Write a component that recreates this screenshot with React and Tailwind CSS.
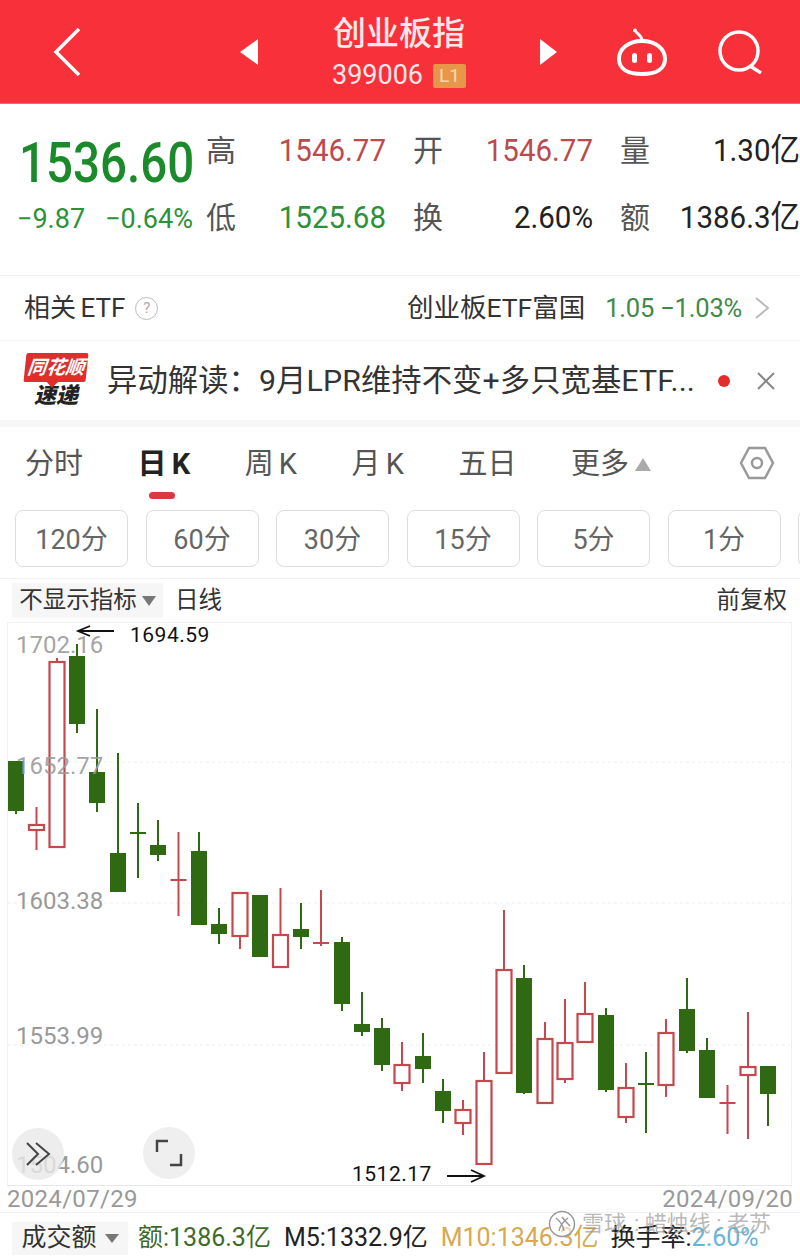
import React from 'react';

// x, wick top, wick bottom, body top, body bottom, up
const candles = [
  [16, 761, 814, 761, 811, 0],
  [36.5, 807, 850, 824, 830, 1],
  [57, 658, 847, 661, 847, 1],
  [77, 644, 733, 656, 724, 0],
  [97, 709, 812, 772, 803, 0],
  [118, 753, 892, 853, 892, 0],
  [138, 803, 878, 833, 833, 0],
  [158, 820, 861, 845, 855, 0],
  [178.5, 832, 916, 880, 880, 1],
  [199, 832, 925, 851, 925, 0],
  [219, 908, 944, 924, 934, 0],
  [240, 892, 949, 892, 936, 1],
  [260, 895, 957, 895, 957, 0],
  [280.5, 888, 967, 934, 967, 1],
  [301, 903, 949, 929, 937, 0],
  [321, 890, 946, 943, 943, 1],
  [342, 937, 1011, 942, 1004, 0],
  [362, 992, 1036, 1024, 1032, 0],
  [382, 1018, 1071, 1028, 1065, 0],
  [402, 1042, 1091, 1064, 1083, 1],
  [423, 1033, 1083, 1056, 1069, 0],
  [443, 1079, 1123, 1091, 1111, 0],
  [463, 1100, 1135, 1109, 1123, 1],
  [484, 1052, 1164, 1080, 1164, 1],
  [504, 910, 1073, 969, 1073, 1],
  [524, 965, 1094, 978, 1093, 0],
  [545, 1022, 1103, 1038, 1103, 1],
  [565, 999, 1083, 1042, 1079, 1],
  [585, 982, 1042, 1013, 1042, 1],
  [606, 1008, 1092, 1015, 1090, 0],
  [626, 1063, 1123, 1087, 1117, 1],
  [646, 1052, 1133, 1084, 1084, 0],
  [666, 1019, 1097, 1032, 1085, 1],
  [687, 978, 1053, 1009, 1051, 0],
  [707, 1038, 1098, 1050, 1098, 0],
  [727.5, 1085, 1134, 1103, 1103, 1],
  [748, 1012, 1139, 1066, 1075, 1],
  [768, 1066, 1126, 1066, 1094, 0],
];

const RED = '#c5484c';
const GREEN = '#2f6a12';

const Candle = ({ c }) => {
  const [x, wt, wb, bt, bb, up] = c;
  const color = up ? RED : GREEN;
  if (bt === bb) {
    return (
      <g stroke={color} strokeWidth="2">
        <line x1={x} x2={x} y1={wt} y2={wb} />
        <line x1={x - 8} x2={x + 8} y1={bt} y2={bt} />
      </g>
    );
  }
  return (
    <g>
      <line x1={x} x2={x} y1={wt} y2={wb} stroke={color} strokeWidth="2" />
      {up ? (
        <rect x={x - 7.5} y={bt + 1} width="15" height={bb - bt - 1} fill="#fff" stroke={color} strokeWidth="2.2" />
      ) : (
        <rect x={x - 8} y={bt} width="16" height={bb - bt} fill={color} />
      )}
    </g>
  );
};

const Stat = ({ label, value, color }) => (
  <div className="flex items-center justify-between">
    <span className="text-[30px] leading-none text-[#555]">{label}</span>
    <span className={`text-[29.5px] leading-none scale-y-[1.08] ${color}`}>{value}</span>
  </div>
);

export default function App() {
  const periods = ['120分', '60分', '30分', '15分', '5分', '1分', ''];

  return (
    <div className="w-[800px] h-[1256px] overflow-hidden bg-white font-['Roboto','Noto_Sans_CJK_SC',sans-serif]">
      {/* top bar */}
      <div className="h-[104px] flex items-center bg-[#f8303a] border-b border-[#d9737a] text-white">
        <svg className="ml-[52px]" width="30" height="50" viewBox="0 0 30 50" fill="none" stroke="#fff" strokeWidth="3.5">
          <path d="M27 2 L4 25 L27 48" />
        </svg>
        <svg className="ml-[158px]" width="18" height="26" viewBox="0 0 18 26" fill="#fff">
          <path d="M18 0 V26 L0 13 Z" />
        </svg>
        <div className="w-[282px] flex flex-col items-center">
          <div className="text-[33px] leading-[40px] font-medium text-[#fde8e8]">创业板指</div>
          <div className="mt-[8px] flex items-center gap-[10px]">
            <span className="text-[27px] leading-none text-[#fde8e8]">399006</span>
            <span className="w-[33px] h-[24px] rounded-[2px] bg-[#e8964a] text-[#f6d9ae] text-[19px] leading-[24px] text-center">L1</span>
          </div>
        </div>
        <svg width="17" height="26" viewBox="0 0 17 26" fill="#fff">
          <path d="M0 0 V26 L17 13 Z" />
        </svg>
        <svg className="ml-[59px]" width="52" height="48" viewBox="0 0 52 48" fill="none" stroke="#fff" strokeWidth="4">
          <path d="M26 13 C12 13 3 21 3 31 C3 41 12 46 26 46 C40 46 49 41 49 31 C49 21 40 13 26 13 Z" />
          <path d="M26 13 C26 8 23 7 20 4" strokeWidth="3" />
          <circle cx="19" cy="2.5" r="2" fill="#fff" stroke="none" />
          <rect x="16" y="25" width="5" height="10" rx="2.5" fill="#fff" stroke="none" />
          <rect x="31" y="25" width="5" height="10" rx="2.5" fill="#fff" stroke="none" />
        </svg>
        <svg className="ml-[49px]" width="46" height="44" viewBox="0 0 46 44" fill="none" stroke="#fff" strokeWidth="3.5">
          <circle cx="22" cy="21" r="19" />
          <path d="M33 36 L44 43" />
        </svg>
      </div>

      {/* quote */}
      <div className="h-[172px] flex border-b border-[#f1f1f1]">
        <div className="w-[206px] shrink-0">
          <div className="pl-[19px] pt-[28px] text-[47.5px] leading-[48px] font-medium text-[#1a8a2a] scale-y-[1.15] origin-top">1536.60</div>
          <div className="pl-[17px] pr-[13px] pt-[26px] flex justify-between text-[27px] leading-none text-[#2c9138]">
            <span>−9.87</span>
            <span>−0.64%</span>
          </div>
        </div>
        <div className="flex-1 grid grid-cols-3 gap-x-[27px] gap-y-[37px] content-start pt-[32px]">
          <Stat label="高" value="1546.77" color="text-[#bb4a4d]" />
          <Stat label="开" value="1546.77" color="text-[#bb4a4d]" />
          <Stat label="量" value="1.30亿" color="text-[#222]" />
          <Stat label="低" value="1525.68" color="text-[#2c9138]" />
          <Stat label="换" value="2.60%" color="text-[#222]" />
          <Stat label="额" value="1386.3亿" color="text-[#222]" />
        </div>
      </div>

      {/* related etf */}
      <div className="h-[65px] flex items-center pl-[24px] pr-[30px] border-b border-[#f6f6f6]">
        <span className="text-[26px] text-[#333] [word-spacing:-2px]">相关 ETF</span>
        <span className="ml-[10px] w-[23px] h-[23px] rounded-full border border-[#bbb] text-[#aaa] text-[15px] leading-[21px] text-center">?</span>
        <span className="ml-auto text-[26.5px] text-[#333]">创业板ETF富国</span>
        <span className="ml-[20px] text-[25.5px] text-[#3f8a48] tracking-[-0.2px]">1.05 −1.03%</span>
        <svg className="ml-[12px]" width="16" height="24" viewBox="0 0 16 24" fill="none" stroke="#bbb" strokeWidth="2">
          <path d="M2 2 L14 12 L2 22" />
        </svg>
      </div>

      {/* news */}
      <div className="h-[86px] flex items-center pl-[24px] border-b-[7px] border-[#f7f7f7]">
        <div className="w-[64px] flex flex-col items-center">
          <div className="relative w-[62px] h-[29px] bg-[#df2e2e] -skew-x-6 rounded-[2px] text-center text-white text-[19px] leading-[29px] italic font-bold">
            同花顺
            <span className="absolute left-[25px] -bottom-[4px] w-[8px] h-[8px] bg-[#df2e2e] rotate-45" />
          </div>
          <div className="mt-[2px] text-[22px] leading-[24px] italic font-black text-[#222]">速递</div>
        </div>
        <span className="ml-[19px] text-[30.3px] tracking-[0.1px] text-[#333] whitespace-nowrap">异动解读：9月LPR维持不变+多只宽基ETF...</span>
        <span className="ml-auto w-[12px] h-[12px] rounded-full bg-[#e52b2b]" />
        <svg className="ml-[27px] mr-[25px]" width="18" height="18" viewBox="0 0 18 18" stroke="#888" strokeWidth="2">
          <path d="M1 1 L17 17 M17 1 L1 17" />
        </svg>
      </div>

      {/* period tabs */}
      <div className="relative h-[83px] flex items-center pl-[25px] pb-[8px] gap-[54.5px] text-[29px] text-[#555] [word-spacing:-2px]">
        <span>分时</span>
        <span className="relative font-bold text-[#222]">
          日 K
          <span className="absolute left-[11px] top-[49px] w-[26px] h-[7px] rounded-full bg-[#d93a3f]" />
        </span>
        <span>周 K</span>
        <span>月 K</span>
        <span>五日</span>
        <span className="flex items-center gap-[6px]">
          更多
          <svg width="16" height="13" viewBox="0 0 16 13" fill="#aaa"><path d="M8 0 L16 13 H0 Z" /></svg>
        </span>
        <svg className="absolute left-[739px] top-[19px]" width="36" height="34" viewBox="0 0 36 34" fill="none" stroke="#999" strokeWidth="2.5">
          <path d="M10 2 H26 L34 17 L26 32 H10 L2 17 Z" />
          <circle cx="18" cy="17" r="5" />
        </svg>
      </div>

      {/* sub periods */}
      <div className="h-[69px] flex gap-[17.5px] pl-[15px] overflow-hidden border-b border-[#f1f1f1]">
        {periods.map((p, i) => (
          <div key={i} className="w-[113px] h-[57px] shrink-0 rounded-lg border border-[#ddd] text-center text-[27px] leading-[58px] text-[#666]">
            {p}
          </div>
        ))}
      </div>

      {/* indicator row */}
      <div className="h-[43px] flex items-center pl-[12px] pr-[13px] text-[23.5px] text-[#333]">
        <div className="w-[151px] h-[35px] flex items-center justify-center gap-[5px] bg-[#f6f6f6] rounded-[2px]">
          不显示指标
          <svg width="14" height="10" viewBox="0 0 14 10" fill="#777"><path d="M0 0 H14 L7 10 Z" /></svg>
        </div>
        <span className="ml-[12px]">日线</span>
        <span className="ml-auto">前复权</span>
      </div>

      {/* chart */}
      <div className="relative h-[564px] mx-[7px] w-[785px] border border-[#f0f0f0] border-b-[#e8e8e8]">
        <svg className="absolute -left-[8px] -top-[1px]" width="800" height="564" viewBox="0 622 800 564">
          <g stroke="#eee" strokeWidth="1" strokeDasharray="3 3">
            <line x1="8" x2="790" y1="762" y2="762" />
            <line x1="8" x2="790" y1="903" y2="903" />
            <line x1="8" x2="790" y1="1045" y2="1045" />
          </g>
          {candles.map((c, i) => <Candle key={i} c={c} />)}
          <g fill="none" stroke="#111" strokeWidth="1.8">
            <path d="M114 631 H78 M90 626 L78 631 L90 636" />
            <path d="M447 1176 H484 M471 1170 L484 1176 L471 1182" />
          </g>
        </svg>
        <div className="absolute left-[8px] top-[6px] text-[24px] leading-[32px] text-[#999]/90">1702.16</div>
        <div className="absolute left-[8px] top-[127px] text-[24px] leading-[32px] text-[#999]/90">1652.77</div>
        <div className="absolute left-[8px] top-[262px] text-[24px] leading-[32px] text-[#999]">1603.38</div>
        <div className="absolute left-[8px] top-[397px] text-[24px] leading-[32px] text-[#999]">1553.99</div>
        <div className="absolute left-[8px] top-[526px] text-[24px] leading-[32px] text-[#999]">1504.60</div>
        <div className="absolute left-[122px] top-[-2px] text-[21px] leading-[28px] tracking-[0.5px] text-[#111]">1694.59</div>
        <div className="absolute left-[344px] top-[537px] text-[21px] leading-[28px] tracking-[0.5px] text-[#111]">1512.17</div>
        <div className="absolute left-[4px] top-[505px] w-[52px] h-[52px] rounded-full bg-[#e9e9e9]/80 flex items-center justify-center">
          <svg width="26" height="26" viewBox="0 0 26 26" fill="none" stroke="#444" strokeWidth="2">
            <path d="M2 2 L13 13 L2 24 M11 2 L24 13 L11 24" />
          </svg>
        </div>
        <div className="absolute left-[135px] top-[504px] w-[52px] h-[52px] rounded-full bg-[#efefef] flex items-center justify-center">
          <svg width="28" height="28" viewBox="0 0 28 28" fill="none" stroke="#444" strokeWidth="2.5">
            <path d="M2 13 V2 H13 M26 15 V26 H15" />
          </svg>
        </div>
      </div>

      {/* dates */}
      <div className="h-[27px] flex items-center justify-between px-[7px] text-[24px] tracking-[0.3px] leading-none text-[#999] border-b border-[#f1f1f1]">
        <span>2024/07/29</span>
        <span>2024/09/20</span>
      </div>

      {/* volume row */}
      <div className="relative h-[43px] flex items-center pl-[12px] text-[25px] whitespace-nowrap">
        <div className="w-[116px] h-[33px] mt-[7px] flex items-center justify-center gap-[8px] bg-[#f6f6f6] text-[#333]">
          成交额
          <svg width="14" height="9" viewBox="0 0 14 9" fill="#777"><path d="M0 0 H14 L7 9 Z" /></svg>
        </div>
        <span className="ml-[10px] mt-[7px] text-[#3f6b2a]">额:1386.3亿</span>
        <span className="ml-[13px] mt-[7px] text-[#222]">M5:1332.9亿</span>
        <span className="ml-[13px] mt-[7px] text-[#d9a850]">M10:1346.3亿</span>
        <span className="ml-[12px] mt-[7px] text-[#222]">换手率:<span className="text-[#67b4d8]">2.60%</span></span>
        <div className="absolute left-[548px] top-[-3px] flex items-center gap-[6px] text-[#9a9a9a]/70">
          <svg width="28" height="28" viewBox="0 0 28 28" fill="none" stroke="#9a9a9a" strokeWidth="1.5">
            <circle cx="14" cy="14" r="12.5" fill="#ffffff" fillOpacity="0.6" />
            <path d="M8 8 C12 11 15 15 16 21 M20 8 C16 11 12 15 11 21 M14 7 C17 11 20 14 22 16" />
          </svg>
          <span className="text-[22px] leading-none">雪球</span>
          <span className="ml-[2px] text-[22px] leading-none">: 蜡烛线 : 老苏</span>
        </div>
      </div>
    </div>
  );
}
